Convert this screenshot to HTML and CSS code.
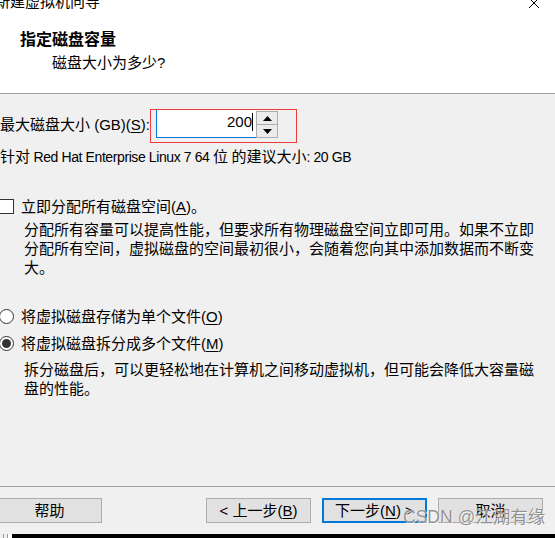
FILE: index.html
```html
<!DOCTYPE html>
<html lang="zh-CN">
<head>
<meta charset="utf-8">
<title>新建虚拟机向导</title>
<link rel="stylesheet" href="styles.css">
</head>
<body>
<div class="window">
  <header class="head">
    <div class="titlebar">
      <span class="title">新建虚拟机向导</span>
      <svg class="close" width="12" height="12" viewBox="0 0 12 12"><path d="M1 1 L11 11 M11 1 L1 11" stroke="#000" stroke-width="1" fill="none"/></svg>
    </div>
    <h1 class="heading">指定磁盘容量</h1>
    <p class="sub">磁盘大小为多少?</p>
  </header>

  <main class="content">
    <div class="size-row">
      <span class="size-label">最大磁盘大小 (GB)(<u>S</u>):</span>
      <div class="mark">
        <div class="spin">
          <div class="spin-input"><span class="value">200</span><span class="caret"></span></div>
          <div class="spin-btns">
            <span class="spin-btn"><svg width="9" height="5" viewBox="0 0 9 5"><path d="M4.5 0 L9 5 L0 5 Z" fill="#000"/></svg></span>
            <span class="spin-btn"><svg width="9" height="5" viewBox="0 0 9 5"><path d="M0 0 L9 0 L4.5 5 Z" fill="#000"/></svg></span>
          </div>
        </div>
      </div>
    </div>
    <p class="hint">针对<span class="latin"> Red Hat Enterprise Linux 7 64 </span>位<span class="latin"> </span>的建议大小<span class="latin">: 20 GB</span></p>

    <div class="option check-row"><span class="checkbox"></span><span>立即分配所有磁盘空间(<u>A</u>)。</span></div>
    <p class="desc desc-a">分配所有容量可以提高性能，但要求所有物理磁盘空间立即可用。如果不立即<br>分配所有空间，虚拟磁盘的空间最初很小，会随着您向其中添加数据而不断变<br>大。</p>

    <div class="option radio-row first"><span class="radio"></span><span>将虚拟磁盘存储为单个文件(<u>O</u>)</span></div>
    <div class="option radio-row second"><span class="radio checked"></span><span>将虚拟磁盘拆分成多个文件(<u>M</u>)</span></div>
    <p class="desc desc-b">拆分磁盘后，可以更轻松地在计算机之间移动虚拟机，但可能会降低大容量磁<br>盘的性能。</p>
  </main>

  <footer class="foot">
    <div class="buttons">
      <span class="btn help">帮助</span>
      <span class="btn-group">
        <span class="btn">&lt; 上一步(<u>B</u>)</span>
        <span class="btn default">下一步(<u>N</u>) &gt;</span>
        <span class="btn">取消</span>
      </span>
    </div>
    <div class="strip"><span class="strip-edge"></span><span class="strip-black"></span></div>
    <span class="watermark">CSDN @江湖有缘</span>
  </footer>
</div>
</body>
</html>
```

FILE: styles.css
```css
* { box-sizing: border-box; }
html, body { margin: 0; padding: 0; }
body {
  width: 555px;
  height: 538px;
  overflow: hidden;
  background: #f0f0f0;
  font-family: "Liberation Sans", "Noto Sans CJK SC", sans-serif;
  font-size: 15px;
  color: #000;
}
.window {
  position: relative;
  height: 538px;
  display: flex;
  flex-direction: column;
}
u { text-decoration: underline; text-underline-offset: 2px; }

/* header */
.head {
  background: #fff;
  height: 94px;
  border-bottom: 1px solid #a0a0a0;
  flex: none;
}
.titlebar {
  height: 12px;
  display: flex;
  justify-content: space-between;
  align-items: flex-start;
}
.title {
  line-height: 19px;
  margin-top: -8px;
  margin-left: -5px;
  white-space: nowrap;
}
.close { margin-top: -3px; margin-right: 15px; }
.heading {
  margin: 18px 0 0 20px;
  font-size: 16px;
  font-weight: bold;
  line-height: 20px;
}
.sub {
  margin: 3px 0 0 52px;
  line-height: 19px;
}

/* content */
.content { flex: none; }
.size-row {
  margin-top: 15px;
  display: flex;
  align-items: center;
}
.size-label {
  flex: 0 0 150px;
  line-height: 19px;
  margin-bottom: 4px;
  white-space: nowrap;
}
.mark {
  width: 147px;
  height: 34px;
  border: 1px solid #ee3b3b;
  padding: 0 0 4px 5px;
}
.spin { display: flex; height: 28px; }
.spin-input {
  width: 100px;
  height: 28px;
  background: #fff;
  border-left: 1px solid #0078d7;
  border-bottom: 1px solid #0078d7;
  display: flex;
  align-items: center;
  justify-content: flex-end;
  padding-right: 3px;
  padding-bottom: 3px;
}
.value { line-height: 18px; }
.caret { width: 1px; height: 18px; background: #000; }
.spin-btns {
  width: 22px;
  margin-top: 1px;
  display: flex;
  flex-direction: column;
  border: 1px solid #adadad;
  background: #ececec;
}
.spin-btn {
  flex: 1;
  display: flex;
  align-items: center;
  justify-content: center;
}
.spin-btn + .spin-btn { border-top: 1px solid #adadad; }

.hint { margin: 4px 0 0 0; line-height: 19px; white-space: nowrap; }
.hint .latin { font-size: 14px; letter-spacing: -0.4px; }

.option {
  display: flex;
  align-items: center;
  gap: 7px;
  line-height: 19px;
  white-space: nowrap;
}
.check-row { margin-top: 30px; margin-left: -1px; }
.checkbox {
  width: 15px; height: 15px;
  background: #fff;
  border: 1px solid #333;
  flex: none;
}
.radio {
  width: 15px; height: 15px;
  border-radius: 50%;
  background: #fff;
  border: 1px solid #333;
  flex: none;
  display: flex;
  align-items: center;
  justify-content: center;
}
.radio.checked::after {
  content: "";
  width: 9px; height: 9px;
  border-radius: 50%;
  background: #333;
}
.radio-row { margin-left: -1px; }
.radio-row.first { margin-top: 30px; }
.radio-row.second { margin-top: 8px; }

.desc {
  margin: 4px 0 0 24px;
  line-height: 19px;
  white-space: nowrap;
}
.desc-b { margin-top: 7px; }

/* footer */
.foot {
  margin-top: auto;
  border-top: 1px solid #a0a0a0;
  padding-top: 11px;
  position: relative;
}
.buttons {
  display: flex;
  justify-content: space-between;
  padding-right: 12px;
}
.btn-group { display: flex; gap: 11px; }
.btn {
  width: 105px;
  height: 25px;
  border: 1px solid #adadad;
  background: #e1e1e1;
  display: flex;
  align-items: center;
  justify-content: center;
  line-height: 19px;
  white-space: nowrap;
}
.btn.help { margin-left: -3px; }
.btn.default { border: 2px solid #0078d7; }
.strip {
  margin-top: 11px;
  height: 4px;
  display: flex;
}
.strip-edge {
  width: 12px;
  background: linear-gradient(90deg, #f0f0f0 0 3px, #999 3px 4px, #f0f0f0 4px 7px, #999 7px 8px, #fff 8px 12px);
}
.strip-black { flex: 1; background: #000; }
.watermark {
  position: absolute;
  left: 403px;
  top: 19px;
  font-size: 17.5px;
  line-height: 22px;
  color: rgba(110, 110, 110, 0.75);
  text-shadow: 0 0 1px #fff, 1px 1px 0 rgba(255,255,255,0.6);
  white-space: nowrap;
}
```
